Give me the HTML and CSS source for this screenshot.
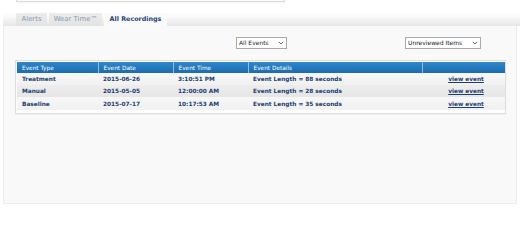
FILE: index.html
```html
<!DOCTYPE html>
<html>
<head>
<meta charset="utf-8">
<link rel="stylesheet" href="styles.css">
</head>
<body>
<div class="page">
  <div class="topbox"></div>
  <div class="tabbar">
    <div class="tab t-alerts">Alerts</div>
    <div class="tab t-wear">Wear Time™</div>
    <div class="tab t-all active">All Recordings</div>
  </div>
  <div class="panel">
    <div class="filters">
      <div class="select sel-events">All Events<svg class="chev" viewBox="0 0 6 4" width="6" height="4"><path d="M0.8 0.8 L3 3 L5.2 0.8" fill="none" stroke="#444" stroke-width="0.8"/></svg></div>
      <div class="select sel-review">Unreviewed Items<svg class="chev" viewBox="0 0 6 4" width="6" height="4"><path d="M0.8 0.8 L3 3 L5.2 0.8" fill="none" stroke="#444" stroke-width="0.8"/></svg></div>
    </div>
    <div class="tablebox">
      <table class="events">
        <colgroup><col class="c1"><col class="c2"><col class="c3"><col class="c4"><col class="c5"></colgroup>
        <thead>
          <tr><th>Event Type</th><th>Event Date</th><th>Event Time</th><th>Event Details</th><th></th></tr>
        </thead>
        <tbody>
          <tr class="r1"><td>Treatment</td><td>2015-06-26</td><td>3:10:51 PM</td><td>Event Length = 88 seconds</td><td class="link"><a href="#">view event</a></td></tr>
          <tr class="r2"><td>Manual</td><td>2015-05-05</td><td>12:00:00 AM</td><td>Event Length = 28 seconds</td><td class="link"><a href="#">view event</a></td></tr>
          <tr class="r3"><td>Baseline</td><td>2015-07-17</td><td>10:17:53 AM</td><td>Event Length = 35 seconds</td><td class="link"><a href="#">view event</a></td></tr>
        </tbody>
      </table>
    </div>
  </div>
</div>
</body>
</html>
```

FILE: styles.css
```css
html, body {
  margin: 0;
  padding: 0;
  background: #ffffff;
}
body {
  font-family: "DejaVu Sans", Verdana, sans-serif;
  width: 520px;
  height: 205px;
  overflow: hidden;
}
.page {
  width: 520px;
}
.topbox {
  margin-left: 16px;
  width: 267px;
  height: 1px;
  border: 1px solid #dcdcdc;
  border-top: none;
  background: #fbfbfb;
  box-shadow: 0 1px 2px rgba(0,0,0,0.05);
}
.tabbar {
  margin-top: 11px;
  margin-left: 3px;
  height: 13px;
  padding-left: 13px;
  display: flex;
  align-items: flex-end;
  gap: 2px;
  background: linear-gradient(#ffffff 0%, #f4f4f4 50%, #e6e6e6 100%);
}
.tab {
  height: 13px;
  box-sizing: border-box;
  font-size: 6.9px;
  line-height: 13px;
  text-align: center;
  white-space: nowrap;
  color: #8799b1;
  background: linear-gradient(#ececec, #e3e3e3);
}
.t-alerts { width: 31px; }
.t-wear { width: 53px; }
.t-all { width: 63px; }
.tab.active {
  font-size: 6.4px;
  background: #fafafa;
  color: #1e3f78;
  font-weight: bold;
}
.panel {
  margin-left: 3px;
  width: 512px;
  height: 177px;
  background: #f9f9f9;
  border: 1px solid #ececec;
  border-top: none;
}
.filters {
  display: flex;
  padding-top: 11px;
  height: 12px;
}
.select {
  box-sizing: border-box;
  height: 12px;
  border: 1px solid #a9a9a9;
  background: #ffffff;
  font-size: 6px;
  line-height: 10px;
  color: #222;
  padding-left: 2px;
  padding-right: 2px;
  display: flex;
  align-items: center;
  justify-content: space-between;
  white-space: nowrap;
}
.sel-events {
  margin-left: 232px;
  width: 51px;
}
.sel-review {
  margin-left: 118px;
  width: 76px;
}
.chev {
  display: block;
}
.tablebox {
  margin-top: 11px;
  margin-left: 11px;
  width: 491px;
  box-sizing: border-box;
  background: #ffffff;
  border: 1px solid #dedede;
  padding: 1px 1px 3px 1px;
  box-shadow: 0 1px 1px rgba(0,0,0,0.04);
}
.events {
  border-collapse: collapse;
  width: 488px;
  table-layout: fixed;
}
.c1 { width: 81px; }
.c2 { width: 75px; }
.c3 { width: 75px; }
.c4 { width: 174px; }
.c5 { width: 83px; }
.events th {
  height: 11px;
  padding: 0 0 0 5px;
  text-align: left;
  font-weight: normal;
  font-size: 5.8px;
  color: #ffffff;
  background: linear-gradient(#2f86c9, #1b6bb0);
  border-left: 1px solid #8dbbe2;
  overflow: hidden;
  white-space: nowrap;
}
.events th:first-child { border-left: none; }
.events td {
  height: 12px;
  padding: 0 0 0 5px;
  font-size: 5.8px;
  font-weight: bold;
  color: #1d3c70;
  white-space: nowrap;
  overflow: hidden;
}
.r1 td { background: linear-gradient(#f8f8f8, #f1f1f1); }
.r2 td { background: linear-gradient(#ededed, #e6e6e6); }
.r3 td { background: linear-gradient(#f7f7f7, #f1f1f1); height: 13px; }
.events td.link {
  text-align: center;
  padding: 0 0 0 5px;
}
.events td.link a {
  color: #1d3c70;
  text-decoration: underline;
}
```
